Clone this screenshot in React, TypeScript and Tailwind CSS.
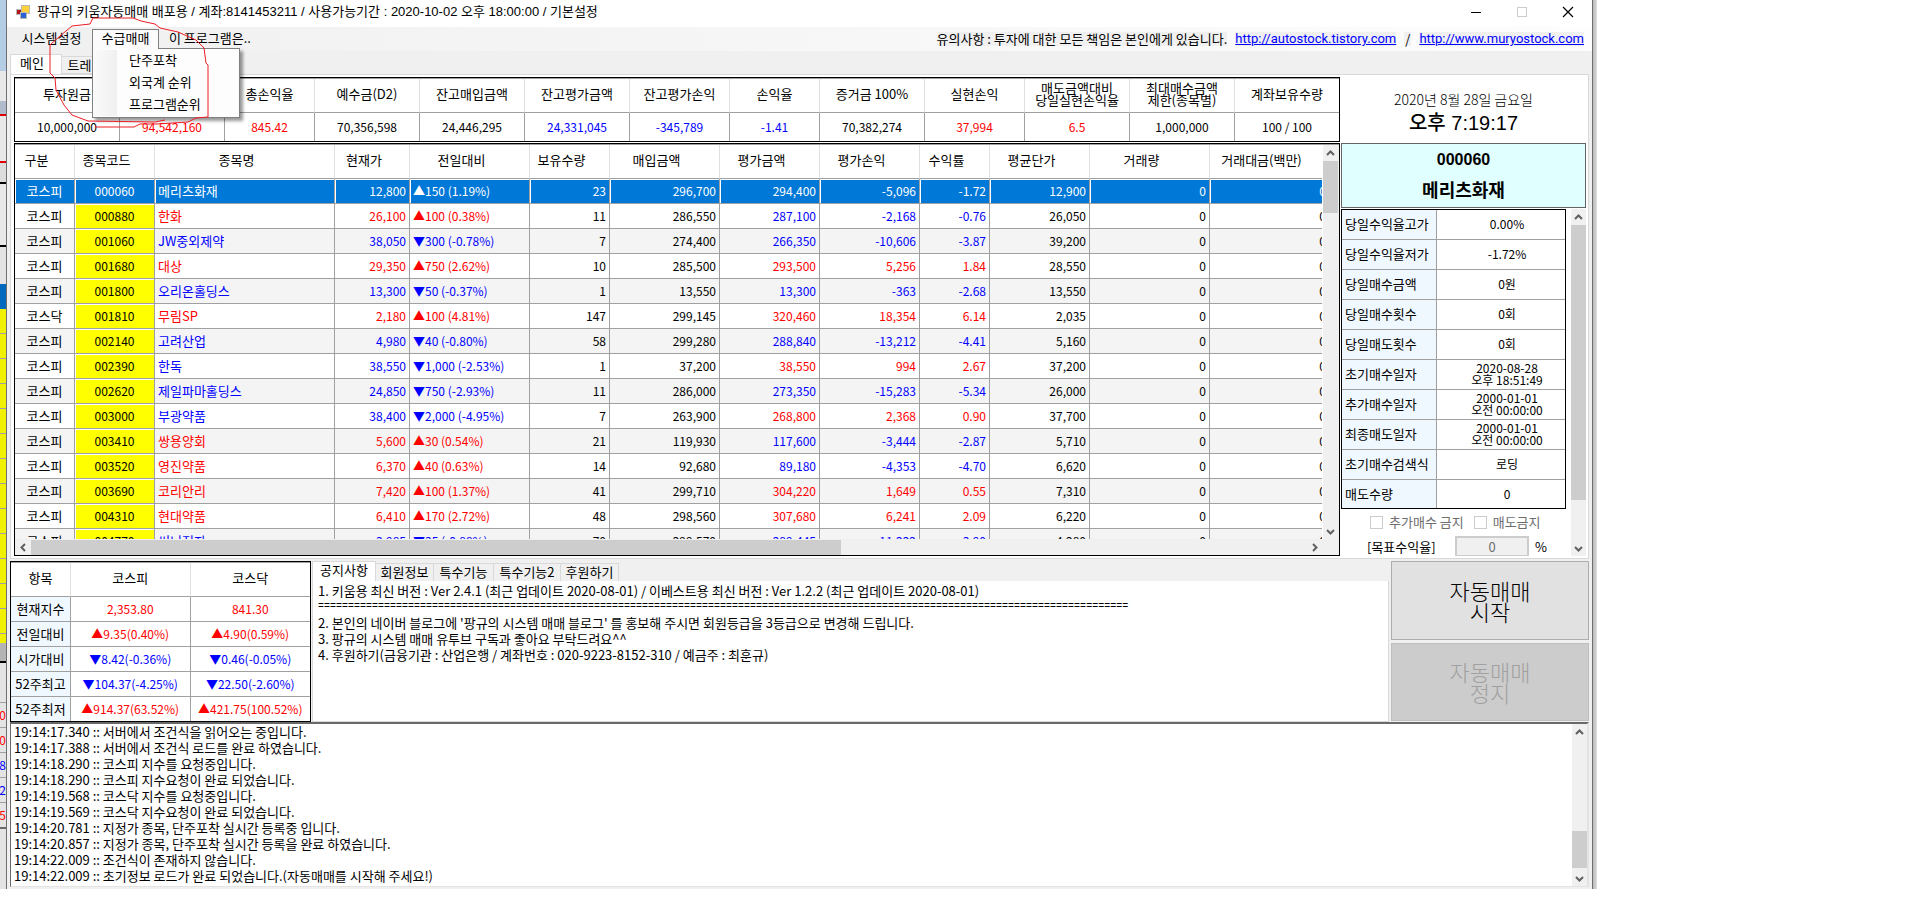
import { useState } from 'react';
import clsx from 'clsx';

type Tone = 'up' | 'down' | 'none';

const tones: Record<Tone, string> = {
  up: 'text-[#ff0000]',
  down: 'text-[#0000ff]',
  none: 'text-black',
};

const summary: { label: string; value: string; tone: Tone; width: string }[] = [
  { label: '투자원금', value: '10,000,000', tone: 'none', width: 'w-[105px]' },
  { label: '총손익금', value: '94,542,160', tone: 'up', width: 'w-[105px]' },
  { label: '총손익율', value: '845.42', tone: 'up', width: 'w-[90px]' },
  { label: '예수금(D2)', value: '70,356,598', tone: 'none', width: 'w-[105px]' },
  { label: '잔고매입금액', value: '24,446,295', tone: 'none', width: 'w-[105px]' },
  { label: '잔고평가금액', value: '24,331,045', tone: 'down', width: 'w-[105px]' },
  { label: '잔고평가손익', value: '-345,789', tone: 'down', width: 'w-[100px]' },
  { label: '손익율', value: '-1.41', tone: 'down', width: 'w-[90px]' },
  { label: '증거금 100%', value: '70,382,274', tone: 'none', width: 'w-[105px]' },
  { label: '실현손익', value: '37,994', tone: 'up', width: 'w-[100px]' },
  { label: '매도금액대비\n당일실현손익율', value: '6.5', tone: 'up', width: 'w-[105px]' },
  { label: '최대매수금액\n제한(종목별)', value: '1,000,000', tone: 'none', width: 'w-[105px]' },
  { label: '계좌보유수량', value: '100 / 100', tone: 'none', width: 'w-[104px]' },
];

const columns = [
  { label: '구분', width: 'w-[60px]' },
  { label: '종목코드', width: 'w-[80px]' },
  { label: '종목명', width: 'w-[180px]' },
  { label: '현재가', width: 'w-[75px]' },
  { label: '전일대비', width: 'w-[120px]' },
  { label: '보유수량', width: 'w-[80px]' },
  { label: '매입금액', width: 'w-[110px]' },
  { label: '평가금액', width: 'w-[100px]' },
  { label: '평가손익', width: 'w-[100px]' },
  { label: '수익률', width: 'w-[70px]' },
  { label: '평균단가', width: 'w-[100px]' },
  { label: '거래량', width: 'w-[120px]' },
  { label: '거래대금(백만)', width: 'w-[120px]' },
];

// market, code, name, price, change, day tone, qty, cost, value, profit, rate, average, profit tone
type Stock = [string, string, string, string, string, Tone, string, string, string, string, string, string, Tone];

const stocks: Stock[] = [
  ['코스피', '000060', '메리츠화재', '12,800', '▲150 (1.19%)', 'up', '23', '296,700', '294,400', '-5,096', '-1.72', '12,900', 'down'],
  ['코스피', '000880', '한화', '26,100', '▲100 (0.38%)', 'up', '11', '286,550', '287,100', '-2,168', '-0.76', '26,050', 'down'],
  ['코스피', '001060', 'JW중외제약', '38,050', '▼300 (-0.78%)', 'down', '7', '274,400', '266,350', '-10,606', '-3.87', '39,200', 'down'],
  ['코스피', '001680', '대상', '29,350', '▲750 (2.62%)', 'up', '10', '285,500', '293,500', '5,256', '1.84', '28,550', 'up'],
  ['코스피', '001800', '오리온홀딩스', '13,300', '▼50 (-0.37%)', 'down', '1', '13,550', '13,300', '-363', '-2.68', '13,550', 'down'],
  ['코스닥', '001810', '무림SP', '2,180', '▲100 (4.81%)', 'up', '147', '299,145', '320,460', '18,354', '6.14', '2,035', 'up'],
  ['코스피', '002140', '고려산업', '4,980', '▼40 (-0.80%)', 'down', '58', '299,280', '288,840', '-13,212', '-4.41', '5,160', 'down'],
  ['코스피', '002390', '한독', '38,550', '▼1,000 (-2.53%)', 'down', '1', '37,200', '38,550', '994', '2.67', '37,200', 'up'],
  ['코스피', '002620', '제일파마홀딩스', '24,850', '▼750 (-2.93%)', 'down', '11', '286,000', '273,350', '-15,283', '-5.34', '26,000', 'down'],
  ['코스피', '003000', '부광약품', '38,400', '▼2,000 (-4.95%)', 'down', '7', '263,900', '268,800', '2,368', '0.90', '37,700', 'up'],
  ['코스피', '003410', '쌍용양회', '5,600', '▲30 (0.54%)', 'up', '21', '119,930', '117,600', '-3,444', '-2.87', '5,710', 'down'],
  ['코스피', '003520', '영진약품', '6,370', '▲40 (0.63%)', 'up', '14', '92,680', '89,180', '-4,353', '-4.70', '6,620', 'down'],
  ['코스피', '003690', '코리안리', '7,420', '▲100 (1.37%)', 'up', '41', '299,710', '304,220', '1,649', '0.55', '7,310', 'up'],
  ['코스피', '004310', '현대약품', '6,410', '▲170 (2.72%)', 'up', '48', '298,560', '307,680', '6,241', '2.09', '6,220', 'up'],
  ['코스피', '004770', '써니전자', '3,985', '▼35 (-0.88%)', 'down', '70', '299,570', '289,445', '-11,222', '-3.90', '4,280', 'down'],
];

const details = [
  ['당일수익율고가', '0.00%'],
  ['당일수익율저가', '-1.72%'],
  ['당일매수금액', '0원'],
  ['당일매수횟수', '0회'],
  ['당일매도횟수', '0회'],
  ['초기매수일자', '2020-08-28\n오후 18:51:49'],
  ['추가매수일자', '2000-01-01\n오전 00:00:00'],
  ['최종매도일자', '2000-01-01\n오전 00:00:00'],
  ['초기매수검색식', '로딩'],
  ['매도수량', '0'],
];

const indexes: [string, string, string, Tone][] = [
  ['현재지수', '2,353.80', '841.30', 'up'],
  ['전일대비', '▲9.35(0.40%)', '▲4.90(0.59%)', 'up'],
  ['시가대비', '▼8.42(-0.36%)', '▼0.46(-0.05%)', 'down'],
  ['52주최고', '▼104.37(-4.25%)', '▼22.50(-2.60%)', 'down'],
  ['52주최저', '▲914.37(63.52%)', '▲421.75(100.52%)', 'up'],
];

const rule = '='.repeat(135);

const notices = [
  '1. 키움용 최신 버전 : Ver 2.4.1 (최근 업데이트 2020-08-01) / 이베스트용 최신 버전 : Ver 1.2.2 (최근 업데이트 2020-08-01)',
  rule,
  "2. 본인의 네이버 블로그에 '팡규의 시스템 매매 블로그' 를 홍보해 주시면 회원등급을 3등급으로 변경해 드립니다.",
  '3. 팡규의 시스템 매매 유투브 구독과 좋아요 부탁드려요^^',
  '4. 후원하기(금융기관 : 산업은행 / 계좌번호 : 020-9223-8152-310 / 예금주 : 최훈규)',
];

const logs = [
  '19:14:17.340 :: 서버에서 조건식을 읽어오는 중입니다.',
  '19:14:17.388 :: 서버에서 조건식 로드를 완료 하였습니다.',
  '19:14:18.290 :: 코스피 지수를 요청중입니다.',
  '19:14:18.290 :: 코스피 지수요청이 완료 되었습니다.',
  '19:14:19.568 :: 코스닥 지수를 요청중입니다.',
  '19:14:19.569 :: 코스닥 지수요청이 완료 되었습니다.',
  '19:14:20.781 :: 지정가 종목, 단주포착 실시간 등록중 입니다.',
  '19:14:20.857 :: 지정가 종목, 단주포착 실시간 등록을 완료 하였습니다.',
  '19:14:22.009 :: 조건식이 존재하지 않습니다.',
  '19:14:22.009 :: 초기정보 로드가 완료 되었습니다.(자동매매를 시작해 주세요!)',
];

const noticeTabs = [
  { label: '공지사항', width: 'w-[64px]' },
  { label: '회원정보', width: 'w-[58px]' },
  { label: '특수기능', width: 'w-[60px]' },
  { label: '특수기능2', width: 'w-[67px]' },
  { label: '후원하기', width: 'w-[58px]' },
];

const arrows = {
  up: 'M1 6 L4.5 2.5 L8 6',
  down: 'M1 3 L4.5 6.5 L8 3',
  left: 'M6 1 L2.5 4.5 L6 8',
  right: 'M3 1 L6.5 4.5 L3 8',
};

function ScrollArrow({ dir }: { dir: keyof typeof arrows }) {
  return (
    <button type="button" aria-label={dir} className="flex size-4 shrink-0 items-center justify-center">
      <svg width="9" height="9" viewBox="0 0 9 9" fill="none" stroke="#606060" strokeWidth="2">
        <path d={arrows[dir]} />
      </svg>
    </button>
  );
}

function VScroll({ before, thumb }: { before?: string; thumb: string }) {
  return (
    <div className="flex w-[15px] shrink-0 flex-col items-center bg-[#f0f0f0]">
      <ScrollArrow dir="up" />
      {before && <div className={before} />}
      <div className={clsx('w-full bg-[#cdcdcd]', thumb)} />
      <div className="grow" />
      <ScrollArrow dir="down" />
    </div>
  );
}

function TitleBar() {
  return (
    <header className="flex h-[27px] items-start justify-between bg-white pr-[18px] pl-[9px]">
      <div className="flex h-[23px] items-center gap-[7px]">
        <svg width="14" height="14" viewBox="0 0 14 14">
          <rect x="5" y="0" width="9" height="9" fill="#b8b8b8" />
          <rect x="6" y="1" width="7" height="7" fill="#ffd23c" />
          <rect x="0" y="4" width="6" height="6" fill="#b8b8b8" />
          <rect x="1" y="5" width="4" height="4" fill="#b01818" />
          <rect x="4" y="7" width="7" height="7" fill="#b8b8b8" />
          <rect x="5" y="8" width="5" height="5" fill="#2a62d4" />
        </svg>
        <h1 className="font-['Liberation_Sans','Noto_Sans_CJK_KR',sans-serif]">
          팡규의 키움자동매매 배포용 / 계좌:8141453211 / 사용가능기간 : 2020-10-02 오후 18:00:00 / 기본설정
        </h1>
      </div>
      <div className="flex h-[23px] items-center gap-[34px]">
        <button type="button" aria-label="최소화">
          <svg width="12" height="12" viewBox="0 0 12 12" stroke="#000">
            <path d="M1 6.5 H11" />
          </svg>
        </button>
        <button type="button" aria-label="최대화" disabled>
          <svg width="12" height="12" viewBox="0 0 12 12" stroke="#ccc" fill="none">
            <rect x="1.500" y="1.500" width="9" height="9" />
          </svg>
        </button>
        <button type="button" aria-label="닫기">
          <svg width="12" height="12" viewBox="0 0 12 12" stroke="#000" strokeWidth="1.200">
            <path d="M1 1 L11 11 M11 1 L1 11" />
          </svg>
        </button>
      </div>
    </header>
  );
}

function MenuBar() {
  return (
    <nav className="flex h-6 items-center justify-between bg-gradient-to-r from-[#f0f0f0] to-[#fdfdfd] pr-2 pl-[4px]">
      <div className="flex h-full items-start">
        <button type="button" className="h-[22px] w-[81px]">
          시스템설정
        </button>
        <div className="relative mt-[2px]">
          <button
            type="button"
            className="relative z-30 h-5 w-[67px] border border-b-0 border-[#808080] bg-[#fbfbfb] pb-[3px] leading-4"
          >
            수급매매
          </button>
          <ul className="absolute top-[19px] left-0 z-20 w-[148px] border border-[#808080] bg-[#fdfdfd] py-px shadow-[3px_3px_3px_rgba(0,0,0,0.4)]">
            {['단주포착', '외국계 순위', '프로그램순위'].map((item) => (
              <li key={item} className="flex h-[22px]">
                <span className="ml-px w-[23px] bg-gradient-to-r from-[#fafafa] to-[#f0f0f0]" />
                <button type="button" className="pb-[2px] pl-3">
                  {item}
                </button>
              </li>
            ))}
          </ul>
        </div>
        <button type="button" className="h-[22px] pl-[10px]">
          이 프로그램은..
        </button>
      </div>
      <div className="flex gap-2 leading-[14px]">
        <span className="bg-[#f0f0f0]">유의사항 : 투자에 대한 모든 책임은 본인에게 있습니다.</span>
        <a href="http://autostock.tistory.com" className="bg-[#f0f0f0] font-['Roboto',sans-serif] text-[#0000ff] underline">
          http://autostock.tistory.com
        </a>
        <span className="bg-[#f0f0f0] px-px">/</span>
        <a href="http://www.muryostock.com" className="bg-[#f0f0f0] font-['Roboto',sans-serif] text-[#0000ff] underline">
          http://www.muryostock.com
        </a>
      </div>
    </nav>
  );
}

function SummaryTable() {
  return (
    <div className="border border-black">
      <table className="w-full table-fixed border-separate border-spacing-0 border-t border-[#a0a0a0] text-center">
        <thead>
          <tr>
            {summary.map(({ label, width }) => (
              <th
                key={label}
                className={clsx(
                  width,
                  'h-[34px] border-r border-b border-r-[#e0e0e0] border-b-[#a0a0a0] pb-[3px] font-normal leading-3 whitespace-pre last:border-r-0'
                )}
              >
                {label}
              </th>
            ))}
          </tr>
        </thead>
        <tbody>
          <tr>
            {summary.map(({ label, value, tone }) => (
              <td key={label} className={clsx('h-[28px] border-r border-[#a0a0a0] text-xs last:border-r-0', tones[tone])}>
                {value}
              </td>
            ))}
          </tr>
        </tbody>
      </table>
    </div>
  );
}

function StockRow({ stock, index, selected, onSelect }: { stock: Stock; index: number; selected: boolean; onSelect: () => void }) {
  const [market, code, name, price, change, day, qty, cost, value, profit, rate, average, result] = stock;
  const cell = clsx(
    'h-[25px] border-r border-b border-[#a0a0a0] px-[3px] whitespace-nowrap',
    selected && 'bg-[#0078d7] text-white shadow-[inset_1px_1px_0_#fff]'
  );
  const number = clsx(cell, 'text-right text-xs');
  const dayTone = selected ? '' : tones[day];
  const resultTone = selected ? '' : tones[result];

  return (
    <tr onClick={onSelect} className={index % 2 ? 'bg-white' : 'bg-[#f4f4f4]'}>
      <td className={clsx(cell, 'text-center')}>{market}</td>
      <td className={clsx(cell, 'text-center text-xs', !selected && 'bg-[#ffff00] shadow-[inset_1px_1px_0_#fff]')}>{code}</td>
      <td className={clsx(cell, dayTone)}>{name}</td>
      <td className={clsx(number, dayTone)}>{price}</td>
      <td className={clsx(cell, dayTone, 'text-xs')}>{change}</td>
      <td className={number}>{qty}</td>
      <td className={number}>{cost}</td>
      <td className={clsx(number, resultTone)}>{value}</td>
      <td className={clsx(number, resultTone)}>{profit}</td>
      <td className={clsx(number, resultTone)}>{rate}</td>
      <td className={number}>{average}</td>
      <td className={number}>0</td>
      <td className={number}>0</td>
    </tr>
  );
}

function StockTable() {
  const [selected, setSelected] = useState('000060');

  return (
    <div className="border border-black">
      <div className="flex border-t border-[#a0a0a0]">
        <div className="h-[394px] min-w-0 flex-1 overflow-hidden">
          <table className="w-[calc(100%+7px)] table-fixed border-separate border-spacing-0">
            <thead>
              <tr>
                {columns.map(({ label, width }) => (
                  <th
                    key={label}
                    className={clsx(
                      width,
                      'h-[34px] border-r border-b border-r-[#e0e0e0] border-b-[#a0a0a0] pr-4 pb-1 font-normal whitespace-nowrap'
                    )}
                  >
                    {label}
                  </th>
                ))}
              </tr>
            </thead>
            <tbody>
              {stocks.map((stock, i) => (
                <StockRow
                  key={stock[1]}
                  stock={stock}
                  index={i}
                  selected={selected === stock[1]}
                  onSelect={() => setSelected(stock[1])}
                />
              ))}
            </tbody>
          </table>
        </div>
        <div className="ml-px flex">
          <VScroll thumb="h-[52px]" />
        </div>
        <div className="w-px bg-[#f0f0f0]" />
      </div>
      <div className="flex h-4 bg-[#f0f0f0] pr-[17px]">
        <ScrollArrow dir="left" />
        <div className="mt-px w-[62%] bg-[#cdcdcd]" />
        <div className="grow" />
        <ScrollArrow dir="right" />
      </div>
    </div>
  );
}

function SidePanel() {
  return (
    <aside className="flex w-[245px] shrink-0 flex-col">
      <div className="flex h-[66px] flex-col items-center pt-[10px]">
        <p className="text-sm leading-6 font-light">2020년 8월 28일 금요일</p>
        <p className="font-['Liberation_Sans','Noto_Sans_CJK_KR',sans-serif] text-xl leading-6 font-medium">오후 7:19:17</p>
      </div>
      <div className="flex h-[65px] flex-col items-center justify-around border border-[#646464] bg-[#e0ffff] font-['Liberation_Sans','Noto_Sans_CJK_KR',sans-serif] font-bold">
        <p className="text-base leading-6">000060</p>
        <p className="text-lg leading-6">메리츠화재</p>
      </div>
      <div className="mt-px flex h-[347px]">
        <div className="flex grow flex-col overflow-hidden">
          <table className="w-[225px] shrink-0 table-fixed border-separate border-spacing-0 border border-black">
            <tbody>
              {details.map(([label, value]) => (
                <tr key={label} className="group">
                  <th className="h-[30px] w-[95px] border-r border-b border-[#a0a0a0] bg-[#f0f8ff] pb-px pl-[3px] text-left font-normal group-last:h-[28px] group-last:border-b-0">
                    {label}
                  </th>
                  <td className="border-b border-[#a0a0a0] pb-px pl-3 text-center text-xs leading-3 whitespace-pre group-last:border-b-0">
                    {value}
                  </td>
                </tr>
              ))}
            </tbody>
          </table>
          <div className="flex h-[27px] shrink-0 items-center gap-[10px] pb-px pl-[29px] text-[#6d6d6d]">
            <label className="flex items-center gap-[6px]">
              <input type="checkbox" disabled className="size-[13px] appearance-none border border-[#ccc] bg-white" />
              추가매수 금지
            </label>
            <label className="flex items-center gap-[6px]">
              <input type="checkbox" disabled className="size-[13px] appearance-none border border-[#ccc] bg-white" />
              매도금지
            </label>
          </div>
          <div className="flex shrink-0 items-center gap-[6px] pl-[26px]">
            <label htmlFor="target" className="w-[82px]">
              [목표수익율]
            </label>
            <input
              id="target"
              disabled
              defaultValue="0"
              className="h-[21px] w-[74px] border-2 border-[#ccc] bg-[#f0f0f0] text-center text-[#6d6d6d]"
            />
            <span>%</span>
          </div>
        </div>
        <VScroll thumb="h-[275px]" />
      </div>
    </aside>
  );
}

function IndexTable() {
  return (
    <div className="w-[301px] shrink-0 border border-black">
      <table className="w-full table-fixed border-separate border-spacing-0 border-t border-[#a0a0a0] bg-white text-center">
        <thead>
          <tr>
            <th className="h-[34px] w-[60px] border-r border-b border-r-[#e0e0e0] border-b-[#a0a0a0] pb-1 font-normal">항목</th>
            <th className="border-r border-b border-r-[#e0e0e0] border-b-[#a0a0a0] pb-1 font-normal">코스피</th>
            <th className="border-b border-[#a0a0a0] pb-1 font-normal">코스닥</th>
          </tr>
        </thead>
        <tbody>
          {indexes.map(([label, kospi, kosdaq, tone]) => (
            <tr key={label} className="group">
              <th className="h-[25px] border-r border-b border-[#a0a0a0] bg-[#f0f8ff] font-normal group-last:h-6 group-last:border-b-0">
                {label}
              </th>
              <td className={clsx('border-r border-b border-[#a0a0a0] text-xs group-last:border-b-0', tones[tone])}>{kospi}</td>
              <td className={clsx('border-b border-[#a0a0a0] text-xs group-last:border-b-0', tones[tone])}>{kosdaq}</td>
            </tr>
          ))}
        </tbody>
      </table>
    </div>
  );
}

function NoticePanel() {
  const [tab, setTab] = useState('공지사항');

  return (
    <section className="flex min-w-0 flex-1 flex-col">
      <div className="flex h-5 items-end">
        {noticeTabs.map(({ label, width }) => (
          <button
            key={label}
            type="button"
            onClick={() => setTab(label)}
            className={clsx(
              width,
              'border-r border-[#d9d9d9] whitespace-nowrap',
              tab === label ? 'h-5 border-t border-l bg-white pb-1 leading-[15px]' : 'h-[18px] border-t bg-[#f0f0f0] pb-px leading-4'
            )}
          >
            {label}
          </button>
        ))}
      </div>
      <div className="grow border border-t-0 border-[#d9d9d9] bg-white pt-[2px] pl-[5px] leading-4">
        {notices.map((line) => (
          <p
            key={line}
            className={clsx('h-4 overflow-hidden whitespace-nowrap', line === rule && "font-['Liberation_Mono',monospace] text-[10px]")}
          >
            {line}
          </p>
        ))}
      </div>
    </section>
  );
}

// slice of the second window that shows to the left of this one
function BackWindow() {
  return (
    <div className="flex w-[7px] shrink-0 flex-col overflow-hidden border-r border-[#707070] bg-[#e4e4e4]">
      <div className="h-[71px] bg-[#b4cce4]" />
      <div className="h-[30px] bg-[#e8e8e8]" />
      <div className="h-[13px] bg-[#b0bccb]" />
      <div className="h-[2px] bg-[#e00000]" />
      <div className="h-[45px] bg-[#e8e8e8]" />
      <div className="h-[2px] bg-[#e00000]" />
      <div className="h-[19px] bg-[#dcdcdc]" />
      <div className="h-[65px] border-y-2 border-black bg-[#e8e8e8]" />
      <div className="h-[37px]" />
      <div className="h-[25px] bg-[#0068bd]" />
      {Array.from({ length: 13 }, (_, i) => (
        <div key={i} className="h-[25px] border-b border-[#a0a0a0] bg-[#f0f000]" />
      ))}
      <div className="h-[9px] bg-[#f0f000]" />
      <div className="h-[18px] bg-[#b4b4b4]" />
      <div className="h-[41px] border-t-2 border-black" />
      {['up', 'up', 'down', 'down', 'up'].map((tone, i) => (
        <div
          key={i}
          className={clsx('flex h-[25px] justify-end border-t border-[#a0a0a0] text-xs leading-6', tones[tone as Tone])}
        >
          {['0', '0', '8', '2', '5'][i]}
        </div>
      ))}
      <div className="grow border-t-2 border-[#696969]" />
    </div>
  );
}

export default function App() {
  return (
    <main className="min-h-screen bg-white">
      <div className="relative flex max-w-[1597px] cursor-default font-['Noto_Sans_CJK_KR',sans-serif] text-[13px] leading-4 text-black">
        <BackWindow />
        <div className="min-w-0 flex-1 bg-[#f0f0f0]">
          <TitleBar />
          <MenuBar />
          <div className="flex h-[23px] items-end pl-[3px]">
            <button type="button" className="h-5 w-[52px] border border-b-0 border-[#d9d9d9] bg-white pr-2 pb-1 leading-[15px]">
              메인
            </button>
            <button
              type="button"
              className="h-[18px] w-[60px] overflow-hidden border border-l-0 border-[#d9d9d9] leading-4 whitespace-nowrap"
            >
              트레이딩
            </button>
          </div>

          <div className="mx-[3px] flex gap-px border border-[#d9d9d9] bg-white pt-[2px] pr-[2px] pb-[2px] pl-[3px]">
            <div className="flex min-w-0 flex-1 flex-col gap-px">
              <SummaryTable />
              <StockTable />
            </div>
            <SidePanel />
          </div>

          <div className="mx-[3px] mt-[2px] flex">
            <IndexTable />
            <div className="ml-px flex min-w-0 flex-1">
              <NoticePanel />
            </div>
            <div className="ml-[2px] flex w-[198px] shrink-0 flex-col gap-[3px] text-[22px] leading-[21px] font-light">
              <button type="button" className="h-[79px] border border-[#adadad] bg-[#e1e1e1]">
                자동매매
                <br />
                시작
              </button>
              <button type="button" disabled className="h-[78px] border border-[#bfbfbf] bg-[#ccc] text-[#a0a0a0]">
                자동매매
                <br />
                정지
              </button>
            </div>
          </div>

          <div className="mx-[3px] mb-[2px] flex border-t-2 border-r-2 border-b border-l border-[#e3e3e3] border-t-[#696969] border-l-[#696969] bg-white">
            <div className="min-w-0 grow pb-[2px] pl-[3px]">
              {logs.map((line) => (
                <p key={line}>{line}</p>
              ))}
            </div>
            <VScroll before="h-[91px]" thumb="h-[37px]" />
          </div>
        </div>
        <div className="w-[5px] shrink-0 border-l border-[#707070] bg-gradient-to-r from-[#b8b8b8] to-[#dedede]" />

        {/* hand-drawn marker round the open menu */}
        <svg
          className="pointer-events-none absolute top-0 left-0 z-40"
          width="260"
          height="135"
          viewBox="0 0 260 135"
          fill="none"
          stroke="#ed1c24"
        >
          <path d="M165 120 L155 122 L88 121 L72 115 L64 105 L56 90 L55 78 L50 73 L50 45 L60 36 L72 26 L90 24 L93 18 L133 18 L141 21 L155 24 L160 28 L178 32 L187 36 L196 40 L204 48 L206 63 L208 65 L208 117 L196 118 L188 122 L157 124 L140 124 L134 127 L95 127" />
        </svg>
      </div>
    </main>
  );
}
